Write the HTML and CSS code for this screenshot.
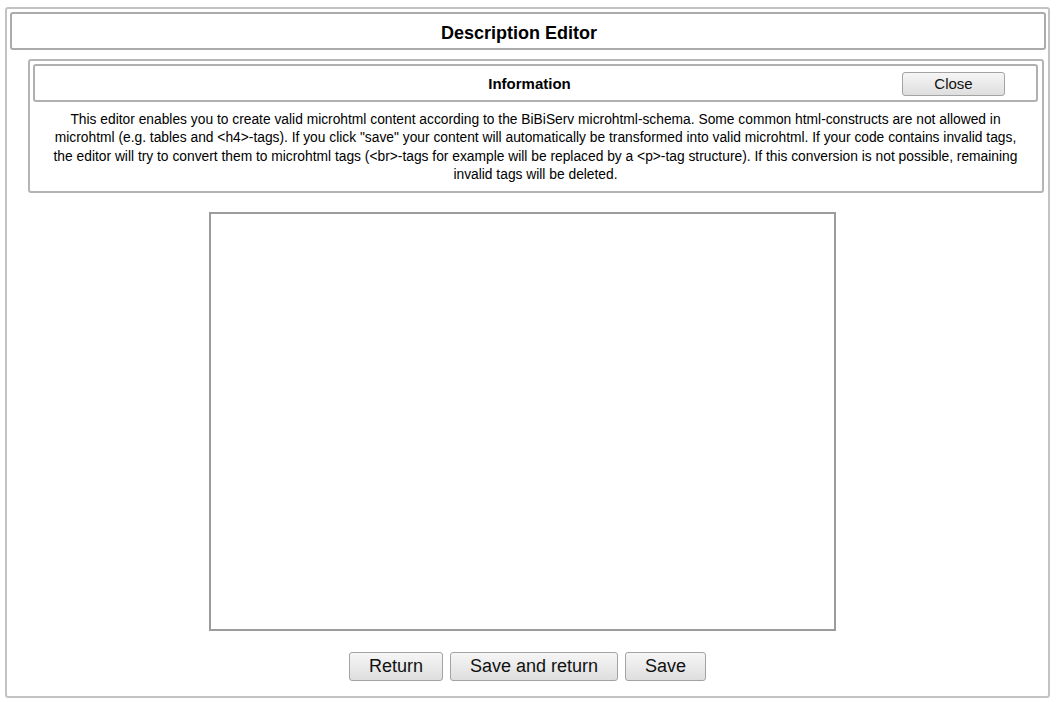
FILE: index.html
```html
<!DOCTYPE html>
<html>
<head>
<meta charset="utf-8">
<title>Description Editor</title>
<link rel="stylesheet" href="styles.css">
</head>
<body>
<div class="page">
  <div class="head">
    <h1 class="head-title">Description Editor</h1>
  </div>
  <div class="info">
    <div class="info-head">
      <span class="info-title">Information</span>
      <button class="btn btn-close" type="button">Close</button>
    </div>
    <p class="info-text">This editor enables you to create valid microhtml content according to the BiBiServ microhtml-schema. Some common html-constructs are not allowed in<br>microhtml (e.g. tables and &lt;h4&gt;-tags). If you click "save" your content will automatically be transformed into valid microhtml. If your code contains invalid tags,<br>the editor will try to convert them to microhtml tags (&lt;br&gt;-tags for example will be replaced by a &lt;p&gt;-tag structure). If this conversion is not possible, remaining<br>invalid tags will be deleted.</p>
  </div>
  <div class="editor-wrap">
    <textarea class="editor"></textarea>
  </div>
  <div class="actions">
    <button class="btn btn-big" type="button">Return</button>
    <button class="btn btn-big" type="button">Save and return</button>
    <button class="btn btn-big" type="button">Save</button>
  </div>
</div>
</body>
</html>
```

FILE: styles.css
```css
html, body {
  margin: 0;
  padding: 0;
  background: #ffffff;
}

body {
  font-family: "Liberation Sans", Arial, sans-serif;
  color: #000;
}

.page {
  box-sizing: border-box;
  margin: 7px 0 0 5px;
  width: 1045px;
  height: 691px;
  border: 2px solid #c3c3c3;
  border-radius: 3px;
  padding: 3px 2px 0 3px;
  display: flex;
  flex-direction: column;
}

.head {
  box-sizing: border-box;
  height: 38px;
  width: 1036px;
  border: 2px solid #ababab;
  border-radius: 3px;
  display: flex;
  align-items: center;
  justify-content: center;
  padding: 3px 18px 0 0;
}

.head-title {
  margin: 0;
  font-size: 18px;
  font-weight: bold;
  line-height: 22px;
}

.info {
  box-sizing: border-box;
  margin: 9px 0 0 18px;
  width: 1016px;
  height: 134px;
  border: 2px solid #b5b5b5;
  border-radius: 3px;
  padding: 3px 4px 0 3px;
}

.info-head {
  box-sizing: border-box;
  height: 38px;
  width: 1005px;
  border: 2px solid #b0b0b0;
  border-radius: 3px;
  display: flex;
  align-items: center;
  padding-right: 31px;
}

.info-title {
  flex: 1;
  text-align: center;
  padding: 1px 0 0 122px;
  font-size: 15px;
  font-weight: bold;
}

.btn {
  font-family: "Liberation Sans", Arial, sans-serif;
  color: #111;
  background: linear-gradient(#f6f6f6, #dedede);
  border: 1px solid #a3a3a3;
  border-radius: 3px;
  margin: 0;
  cursor: pointer;
}

.btn-close {
  width: 103px;
  height: 24px;
  font-size: 15px;
  padding: 0;
  margin-top: 1px;
}

.info-text {
  margin: 9px 0 0 0;
  font-size: 13.8px;
  line-height: 18.4px;
  text-align: center;
  white-space: nowrap;
}

.editor-wrap {
  margin: 19px 0 0 199px;
  display: flex;
}

.editor {
  box-sizing: border-box;
  width: 627px;
  height: 419px;
  border: 2px solid #9c9c9c;
  border-radius: 0;
  resize: none;
  margin: 0;
  padding: 2px;
  background: #fff;
  outline: none;
}

.actions {
  margin-top: 21px;
  display: flex;
  justify-content: center;
  gap: 7px;
  padding-left: 1px;
  padding-right: 2px;
}

.btn-big {
  height: 29px;
  font-size: 18px;
  padding: 0 19px;
}
```
